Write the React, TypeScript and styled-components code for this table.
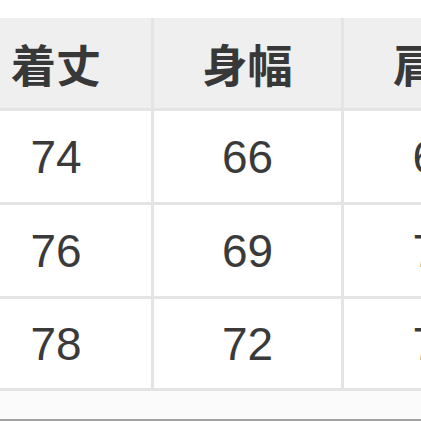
import React from "react";
import styled, { createGlobalStyle } from "styled-components";

const Global = createGlobalStyle`
  html, body { margin: 0; padding: 0; background: #ffffff; }
  body { width: 421px; height: 421px; overflow: hidden; }
`;

const Page = styled.div`
  width: 421px;
  height: 421px;
  overflow: hidden;
  background: #ffffff;
  display: flex;
  flex-direction: column;
  padding-top: 18px;
  box-sizing: border-box;
`;

const Viewport = styled.div`
  width: 421px;
  overflow: hidden;
`;

const Grid = styled.div`
  margin-left: -39px;
  width: 570px;
  display: grid;
  grid-template-columns: 190px 187px 188px;
  grid-template-rows: 90px 91px 91px 89px;
  column-gap: 3px;
  row-gap: 3px;
  padding-bottom: 3px;
  background: #e4e4e4;
`;

const Cell = styled.div<{ $head?: boolean }>`
  display: flex;
  align-items: center;
  justify-content: center;
  background: ${(p) => (p.$head ? "#efefef" : "#ffffff")};
  color: ${(p) => (p.$head ? "#383838" : "#3a3a3a")};
  font-family: ${(p) =>
    p.$head
      ? '"Noto Sans CJK JP", "Noto Sans", sans-serif'
      : '"Liberation Sans", Arial, sans-serif'};
  font-weight: ${(p) => (p.$head ? 700 : 400)};
  font-size: ${(p) => (p.$head ? "45px" : "46px")};
  line-height: 1;
  white-space: nowrap;
`;

const Footer = styled.div`
  flex: 1;
  background: #fbfbfb;
  border-bottom: 2px solid #a2a2a2;
`;

const head = ["着丈", "身幅", "肩幅"];
const rows = [
  ["74", "66", "63"],
  ["76", "69", "71"],
  ["78", "72", "72"],
];

export default function App() {
  return (
    <>
      <Global />
      <Page>
        <Viewport>
          <Grid>
            {head.map((h) => (
              <Cell $head key={h}>
                {h}
              </Cell>
            ))}
            {rows.map((r, i) =>
              r.map((v, j) => <Cell key={`${i}-${j}`}>{v}</Cell>)
            )}
          </Grid>
        </Viewport>
        <Footer />
      </Page>
    </>
  );
}
